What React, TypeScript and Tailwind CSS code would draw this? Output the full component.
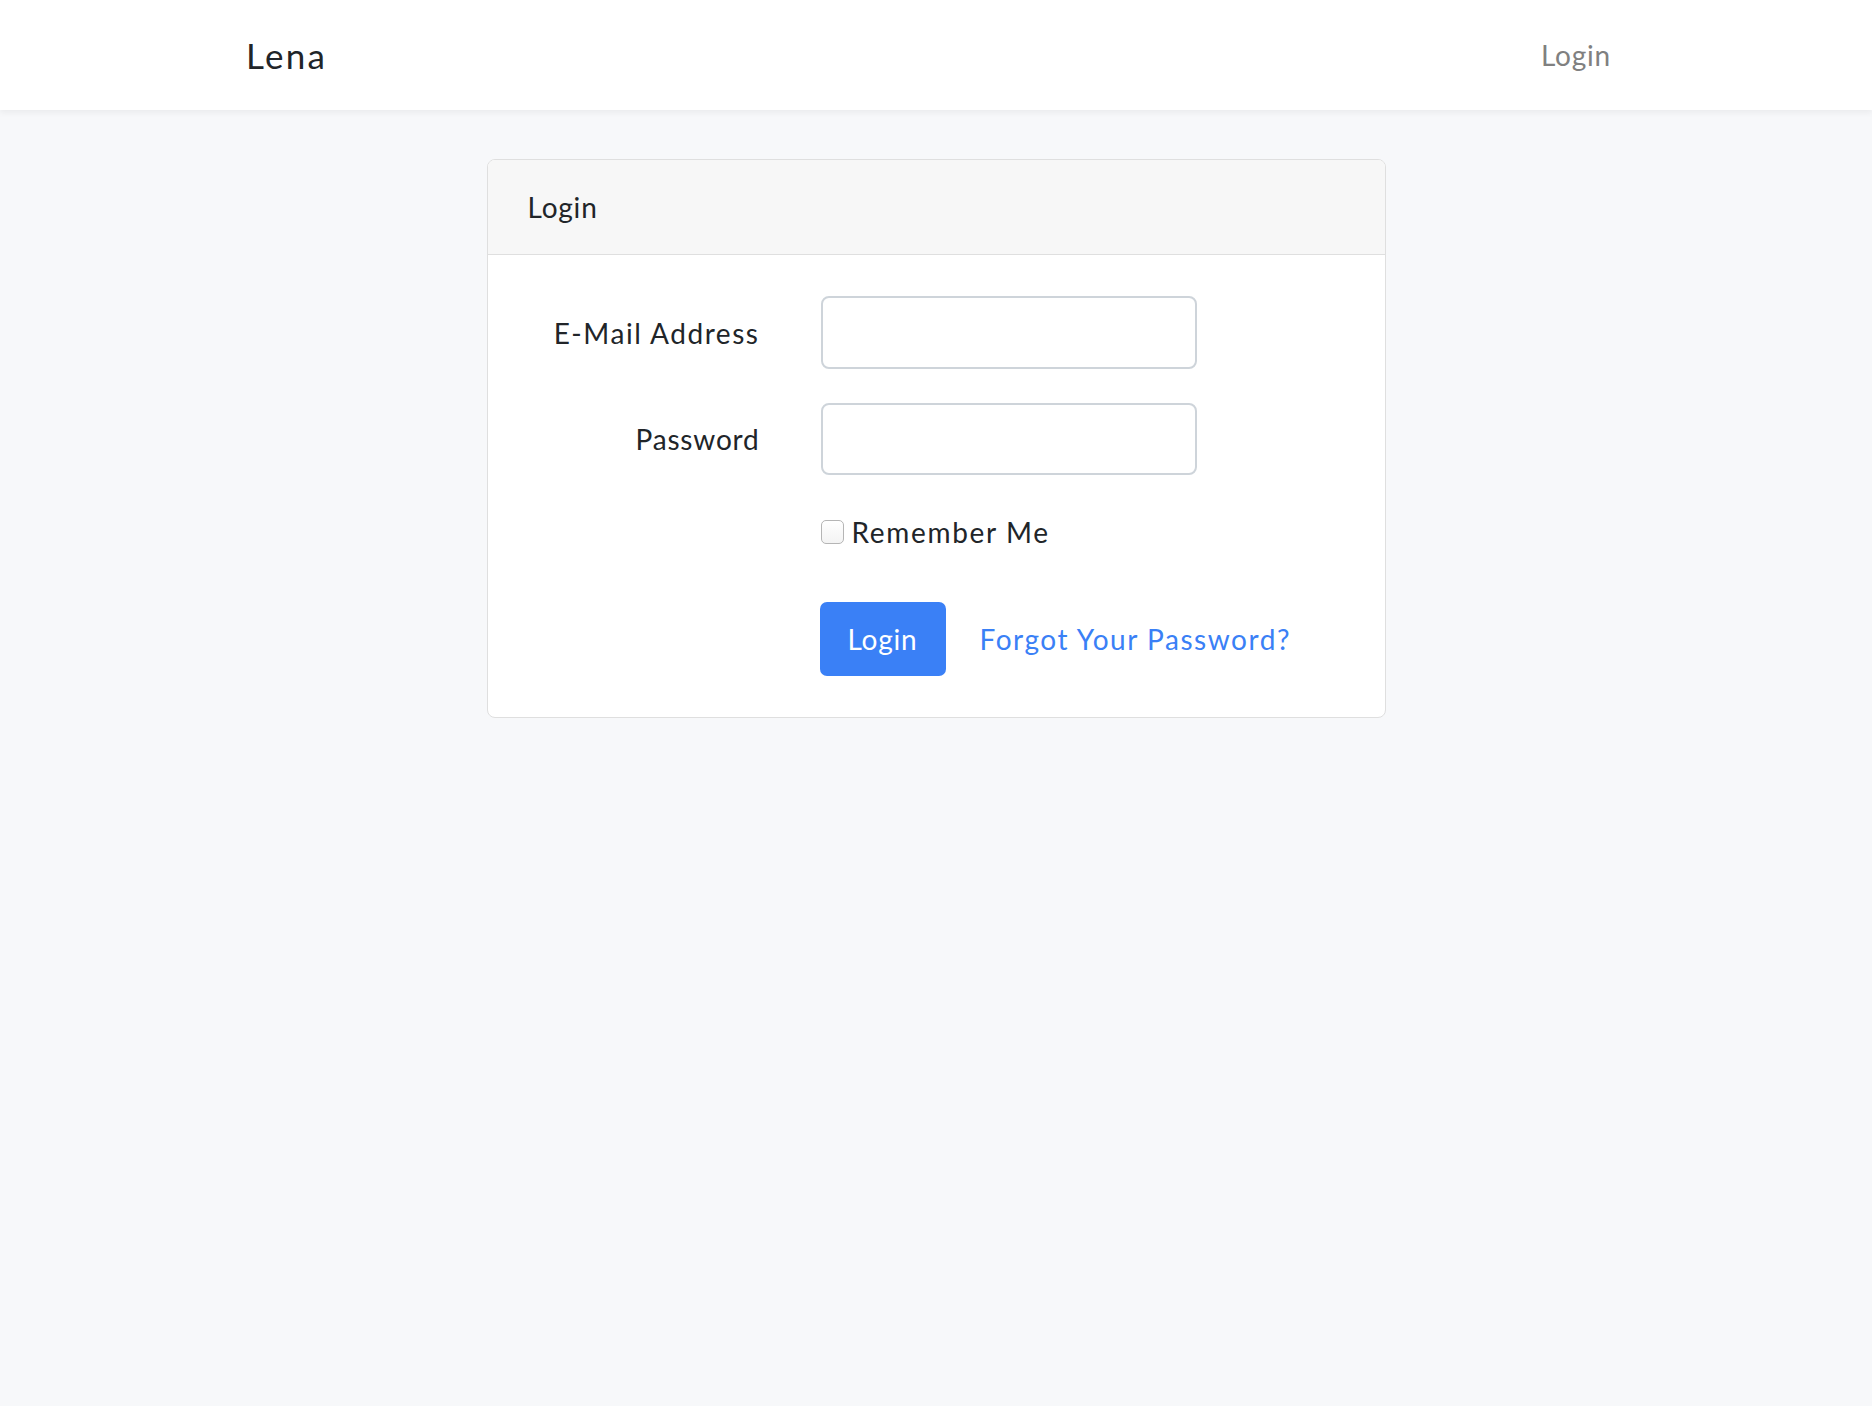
import React from 'react';

export default function App() {
    return (
        <div className="min-h-[1406px] w-full bg-[#f7f8fa] text-[#212529] font-['Lato','Noto_Sans',sans-serif] tracking-[0.05em]">
            {/* Navbar */}
            <nav className="h-[110px] w-full bg-white shadow-[0_3px_6px_rgba(0,0,0,0.05)]">
                <div className="mx-auto flex h-full w-[1376px] items-center justify-between">
                    <a href="#" className="-ml-[2px] text-[35px] leading-none tracking-[0.065em] text-[#212529]">Lena</a>
                    <a href="#" className="pr-[13px] text-[28px] leading-none text-[#808080]">Login</a>
                </div>
            </nav>

            {/* Content */}
            <main className="pt-[49px]">
                <div className="mx-auto w-[899px] overflow-hidden rounded-[8px] border border-[#dfdfdf] bg-white">
                    <div className="flex h-[95px] items-center border-b border-[#dfdfdf] bg-[#f7f7f7] px-[40px] text-[28px]">
                        Login
                    </div>

                    <form className="px-[40px] pt-[41px] pb-[41px] text-[28px]">
                        <div className="mb-[34px] flex items-center gap-[61px]">
                            <label className="w-[232px] text-right tracking-[0.055em]">E-Mail Address</label>
                            <input
                                type="email"
                                className="h-[73px] w-[376px] rounded-[8px] border-2 border-[#ced4da] bg-white px-[20px] outline-none"
                            />
                        </div>

                        <div className="mb-[34px] flex items-center gap-[61px]">
                            <label className="w-[232px] text-right">Password</label>
                            <input
                                type="password"
                                className="h-[72px] w-[376px] rounded-[8px] border-2 border-[#ced4da] bg-white px-[20px] outline-none"
                            />
                        </div>

                        <div className="mb-[48px] flex h-[45px] items-center pl-[293px]">
                            <span className="mr-[8px] h-[24px] w-[23px] rounded-[5px] border border-[#b5b5b5] bg-gradient-to-b from-white to-[#f3f3f3]" />
                            <span className="tracking-[0.06em]">Remember Me</span>
                        </div>

                        <div className="flex items-center pl-[292px]">
                            <button
                                type="button"
                                className="flex h-[74px] w-[126px] items-center justify-center rounded-[7px] bg-[#3a80f6] text-white"
                            >
                                Login
                            </button>
                            <a href="#" className="ml-[34px] tracking-[0.055em] text-[#3a80f6]">Forgot Your Password?</a>
                        </div>
                    </form>
                </div>
            </main>
        </div>
    );
}
